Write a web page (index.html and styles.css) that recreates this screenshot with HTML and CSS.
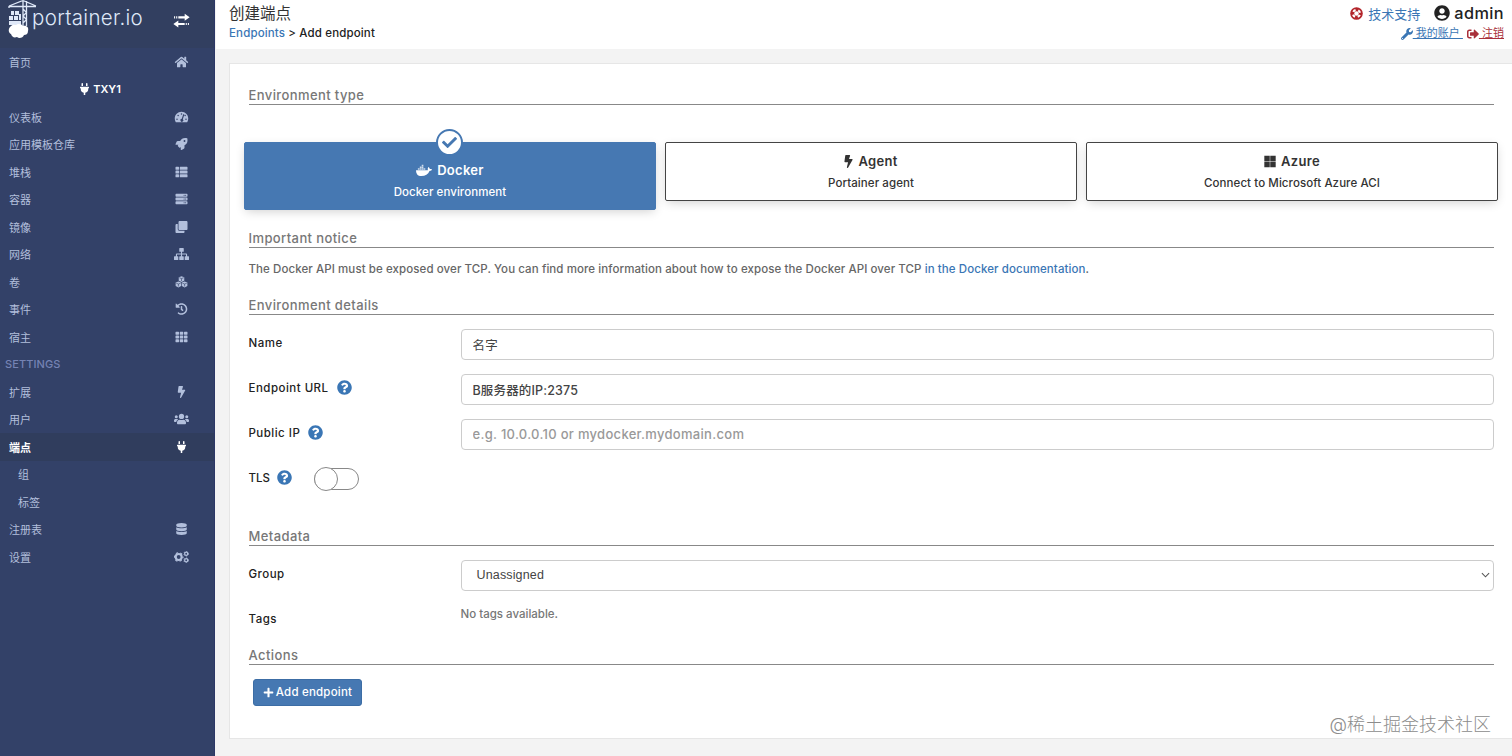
FILE: index.html
```html
<!DOCTYPE html>
<html lang="zh">
<head>
<meta charset="UTF-8">
<meta name="viewport" content="width=device-width, initial-scale=1.0">
<title>Portainer</title>
<link rel="stylesheet" href="styles.css">
</head>
<body>

<!-- icon sprite -->
<svg class="sprite">
  <symbol id="home" viewBox="0 0 576 512"><path d="M280.37 148.26L96 300.11V464a16 16 0 0 0 16 16l112.06-.29a16 16 0 0 0 15.92-16V368a16 16 0 0 1 16-16h64a16 16 0 0 1 16 16v95.64a16 16 0 0 0 16 16.05L464 480a16 16 0 0 0 16-16V300L295.67 148.26a12.19 12.19 0 0 0-15.3 0zM571.6 251.47L488 182.56V44.05a12 12 0 0 0-12-12h-56a12 12 0 0 0-12 12v72.61L318.47 43a48 48 0 0 0-61 0L4.34 251.47a12 12 0 0 0-1.6 16.9l25.5 31A12 12 0 0 0 45.15 301l235.22-193.74a12.19 12.19 0 0 1 15.3 0L530.9 301a12 12 0 0 0 16.9-1.6l25.5-31a12 12 0 0 0-1.7-16.93z"/></symbol>
  <symbol id="plug" viewBox="0 0 384 512"><path d="M320,32a32,32,0,0,0-64,0v96h64Zm48,128H16A16,16,0,0,0,0,176v32a16,16,0,0,0,16,16H32v32A160.07,160.07,0,0,0,160,412.8V512h64V412.8A160.07,160.07,0,0,0,352,256V224h16a16,16,0,0,0,16-16V176A16,16,0,0,0,368,160ZM128,32a32,32,0,0,0-64,0v96h64Z"/></symbol>
  <symbol id="tachometer" viewBox="0 0 576 512"><path fill-rule="evenodd" d="M288 32C129 32 0 161 0 320c0 53 14 102 39 145 6 9 16 15 27 15h444c11 0 21-6 27-15 25-43 39-92 39-145C576 161 447 32 288 32zM288 96a32 32 0 1 1 0 64a32 32 0 1 1 0-64zM96 384a32 32 0 1 1 0-64a32 32 0 1 1 0 64zM144 224a32 32 0 1 1 0-64a32 32 0 1 1 0 64zM391 134a24 24 0 0 1 15 30l-61 184a64 64 0 1 1-46-15l61-184a24 24 0 0 1 31-15zM480 384a32 32 0 1 1 0-64a32 32 0 1 1 0 64zM442 224a32 32 0 1 1 0-64a32 32 0 1 1 0 64z"/></symbol>
  <symbol id="rocket" viewBox="0 0 512 512"><path d="M505.12 19.09c-1.19-5.53-6.66-11-12.21-12.19C460.72 0 435.51 0 410.41 0 307.18 0 245.27 55.2 199.05 128H94.84c-16.35.02-35.56 11.88-42.89 26.48L2.52 253.3A28.4 28.4 0 0 0 0 264a24 24 0 0 0 24 24h103.82l-22.48 22.47c-11.36 11.36-13 32.26 0 45.25l50.91 50.9c11.15 11.19 32.15 13.16 45.27 0L224 384.16V488a24 24 0 0 0 24 24 28.56 28.56 0 0 0 10.71-2.52l98.73-49.39c14.63-7.3 26.51-26.5 26.51-42.86V312.8C456.55 266.48 512 204.39 512 101.7c.08-25.2.08-50.4-6.88-82.61zM384.04 168a40 40 0 1 1 40-40 40 40 0 0 1-40 40z"/></symbol>
  <symbol id="th-list" viewBox="0 0 512 512"><path d="M24 32h101c13 0 24 11 24 24v80c0 13-11 24-24 24H24c-13 0-24-11-24-24V56c0-13 11-24 24-24zM24 192h101c13 0 24 11 24 24v80c0 13-11 24-24 24H24c-13 0-24-11-24-24v-80c0-13 11-24 24-24zM24 352h101c13 0 24 11 24 24v80c0 13-11 24-24 24H24c-13 0-24-11-24-24v-80c0-13 11-24 24-24zM205 32h283c13 0 24 11 24 24v80c0 13-11 24-24 24H205c-13 0-24-11-24-24V56c0-13 11-24 24-24zM205 192h283c13 0 24 11 24 24v80c0 13-11 24-24 24H205c-13 0-24-11-24-24v-80c0-13 11-24 24-24zM205 352h283c13 0 24 11 24 24v80c0 13-11 24-24 24H205c-13 0-24-11-24-24v-80c0-13 11-24 24-24z"/></symbol>
  <symbol id="server" viewBox="0 0 512 512"><path fill-rule="evenodd" d="M480 160H32a32 32 0 0 1-32-32V64a32 32 0 0 1 32-32h448a32 32 0 0 1 32 32v64a32 32 0 0 1-32 32zM432 72a24 24 0 1 0 0 48a24 24 0 1 0 0-48zM368 72a24 24 0 1 0 0 48a24 24 0 1 0 0-48zM480 320H32a32 32 0 0 1-32-32v-64a32 32 0 0 1 32-32h448a32 32 0 0 1 32 32v64a32 32 0 0 1-32 32zM432 232a24 24 0 1 0 0 48a24 24 0 1 0 0-48zM368 232a24 24 0 1 0 0 48a24 24 0 1 0 0-48zM480 480H32a32 32 0 0 1-32-32v-64a32 32 0 0 1 32-32h448a32 32 0 0 1 32 32v64a32 32 0 0 1-32 32zM432 392a24 24 0 1 0 0 48a24 24 0 1 0 0-48zM368 392a24 24 0 1 0 0 48a24 24 0 1 0 0-48z"/></symbol>
  <symbol id="clone" viewBox="0 0 512 512"><path d="M464 0c26.51 0 48 21.49 48 48v288c0 26.51-21.49 48-48 48H176c-26.51 0-48-21.49-48-48V48c0-26.51 21.49-48 48-48h288M176 416c-44.112 0-80-35.888-80-80V128H48c-26.51 0-48 21.49-48 48v288c0 26.51 21.49 48 48 48h288c26.51 0 48-21.49 48-48v-48H176z"/></symbol>
  <symbol id="sitemap" viewBox="0 0 640 512"><path d="M248 0h144a24 24 0 0 1 24 24v112a24 24 0 0 1-24 24h-48v72h176a40 40 0 0 1 40 40v80h56a24 24 0 0 1 24 24v112a24 24 0 0 1-24 24H480a24 24 0 0 1-24-24V376a24 24 0 0 1 24-24h32v-72H344v72h48a24 24 0 0 1 24 24v112a24 24 0 0 1-24 24H248a24 24 0 0 1-24-24V376a24 24 0 0 1 24-24h48v-72H128v72h32a24 24 0 0 1 24 24v112a24 24 0 0 1-24 24H24a24 24 0 0 1-24-24V376a24 24 0 0 1 24-24h56v-80a40 40 0 0 1 40-40h176v-72h-48a24 24 0 0 1-24-24V24a24 24 0 0 1 24-24z"/></symbol>
  <symbol id="cubes" viewBox="0 0 512 512">
    <g id="cube"><path d="M256 6l118 44v148l-118 56-118-56V50z"/><path d="M160 72l96 38 96-38M256 110v104" fill="none" stroke="#334168" stroke-width="26"/></g>
    <use href="#cube" x="-132" y="232"/><use href="#cube" x="132" y="232"/>
  </symbol>
  <symbol id="history" viewBox="0 0 512 512"><path d="M504 255.531c.253 136.64-111.18 248.372-247.82 248.468-59.015.042-113.223-20.53-155.822-54.911-11.077-8.94-11.905-25.541-1.839-35.607l11.267-11.267c8.609-8.609 22.353-9.551 31.891-1.984C173.062 425.135 212.781 440 256 440c101.705 0 184-82.311 184-184 0-101.705-82.311-184-184-184-48.814 0-93.149 18.969-126.068 49.932l50.754 50.754c10.08 10.08 2.941 27.314-11.313 27.314H24c-8.837 0-16-7.163-16-16V38.627c0-14.254 17.234-21.393 27.314-11.314l49.372 49.372C129.209 34.136 189.552 8 256 8c136.81 0 247.747 110.78 248 247.531zm-180.912 78.784l9.823-12.63c8.138-10.463 6.253-25.542-4.21-33.679L288 256.349V152c0-13.255-10.745-24-24-24h-16c-13.255 0-24 10.745-24 24v135.651l65.409 50.874c10.463 8.137 25.541 6.253 33.679-4.21z"/></symbol>
  <symbol id="th" viewBox="0 0 512 512"><path d="M20 32h109q20 0 20 20v88q0 20-20 20H20q-20 0-20-20V52q0-20 20-20zM201 32h110q20 0 20 20v88q0 20-20 20H201q-20 0-20-20V52q0-20 20-20zM383 32h109q20 0 20 20v88q0 20-20 20H383q-20 0-20-20V52q0-20 20-20zM20 192h109q20 0 20 20v88q0 20-20 20H20q-20 0-20-20v-88q0-20 20-20zM201 192h110q20 0 20 20v88q0 20-20 20H201q-20 0-20-20v-88q0-20 20-20zM383 192h109q20 0 20 20v88q0 20-20 20H383q-20 0-20-20v-88q0-20 20-20zM20 352h109q20 0 20 20v88q0 20-20 20H20q-20 0-20-20v-88q0-20 20-20zM201 352h110q20 0 20 20v88q0 20-20 20H201q-20 0-20-20v-88q0-20 20-20zM383 352h109q20 0 20 20v88q0 20-20 20H383q-20 0-20-20v-88q0-20 20-20z"/></symbol>
  <symbol id="bolt" viewBox="0 0 320 512"><path d="M296 160H180.6l42.6-129.8C227.2 15 215.7 0 200 0H56C44 0 33.8 8.9 32.2 20.8l-32 240C-1.7 275.2 9.5 288 24 288h118.7L96.6 482.5c-3.6 15.2 8 29.5 23.3 29.5 8.4 0 16.4-4.4 20.8-12l176-304c9.3-15.9-2.2-36-20.7-36z"/></symbol>
  <symbol id="users" viewBox="0 0 640 512"><circle cx="96" cy="160" r="64"/><circle cx="544" cy="160" r="64"/><circle cx="320" cy="144" r="112"/><path d="M64 256h64c18 0 34 7 45 19-40 22-69 61-75 109H32c-18 0-32-14-32-32v-32c0-35 29-64 64-64zM576 256h-64c-18 0-34 7-45 19 40 22 69 61 75 109h66c18 0 32-14 32-32v-32c0-35-29-64-64-64zM243 288h8c42 20 96 20 138 0h8c64 0 115 52 115 115v29c0 27-21 48-48 48H176c-27 0-48-21-48-48v-29c0-63 51-115 115-115z"/></symbol>
  <symbol id="database" viewBox="0 0 448 512"><path d="M448 73.143v45.714C448 159.143 347.667 192 224 192S0 159.143 0 118.857V73.143C0 32.857 100.333 0 224 0s224 32.857 224 73.143zM448 176v102.857C448 319.143 347.667 352 224 352S0 319.143 0 278.857V176c48.125 33.143 136.208 48.572 224 48.572S399.874 209.143 448 176zm0 160v102.857C448 479.143 347.667 512 224 512S0 479.143 0 438.857V336c48.125 33.143 136.208 48.572 224 48.572S399.874 369.143 448 336z"/></symbol>
  <symbol id="cogs" viewBox="0 0 640 512"><g fill="none" stroke="currentColor"><circle cx="200" cy="256" r="126" stroke-width="90"/><circle cx="200" cy="256" r="184" stroke-width="50" stroke-dasharray="96.350 96.350" stroke-dashoffset="48"/><circle cx="520" cy="116" r="66" stroke-width="54"/><circle cx="520" cy="116" r="100" stroke-width="34" stroke-dasharray="52.360 52.360"/><circle cx="520" cy="396" r="66" stroke-width="54"/><circle cx="520" cy="396" r="100" stroke-width="34" stroke-dasharray="52.360 52.360"/></g></symbol>
  <symbol id="exchange" viewBox="0 0 48 42"><path d="M3 9h3v6H3zM9 9h3v6H9zM15 9h18V2l14 10-14 10v-7H15zM45 28h-3v6h3zM39 28h-3v6h3zM33 28H15v-7L1 31l14 10v-7h18z"/></symbol>
  <symbol id="check" viewBox="0 0 512 512"><path d="M173.898 439.404l-166.4-166.4c-9.997-9.997-9.997-26.206 0-36.204l36.203-36.204c9.997-9.998 26.207-9.998 36.204 0L192 312.69 432.095 72.596c9.997-9.997 26.207-9.997 36.204 0l36.203 36.204c9.997 9.997 9.997 26.206 0 36.204l-294.4 294.401c-9.998 9.997-26.207 9.997-36.204-.001z"/></symbol>
  <symbol id="question" viewBox="0 0 512 512"><path d="M504 256c0 136.997-111.043 248-248 248S8 392.997 8 256C8 119.083 119.043 8 256 8s248 111.083 248 248zM262.655 90c-54.497 0-89.255 22.957-116.549 63.758-3.536 5.286-2.353 12.415 2.715 16.258l34.699 26.31c5.205 3.947 12.621 3.008 16.665-2.122 17.864-22.658 30.113-35.797 57.303-35.797 20.429 0 45.698 13.148 45.698 32.958 0 14.976-12.363 22.667-32.534 33.976C247.128 238.528 216 254.941 216 296v4c0 6.627 5.373 12 12 12h56c6.627 0 12-5.373 12-12v-1.333c0-28.462 83.186-29.647 83.186-106.667 0-58.002-60.165-102-116.531-102zM256 338c-25.365 0-46 20.635-46 46 0 25.364 20.635 46 46 46s46-20.636 46-46c0-25.365-20.635-46-46-46z"/></symbol>
  <symbol id="life-ring" viewBox="0 0 512 512"><circle cx="256" cy="256" r="248"/><circle cx="256" cy="256" r="140" fill="none" stroke="#fff" stroke-width="84" stroke-dasharray="110 110" stroke-dashoffset="-55"/><circle cx="256" cy="256" r="88" fill="#fff"/></symbol>
  <symbol id="user" viewBox="0 0 496 512"><path d="M248 8C111 8 0 119 0 256s111 248 248 248 248-111 248-248S385 8 248 8zm0 96c48.6 0 88 39.4 88 88s-39.4 88-88 88-88-39.4-88-88 39.4-88 88-88zm0 344c-58.7 0-111.3-26.6-146.5-68.2 18.8-35.4 55.6-59.8 98.5-59.8 2.4 0 4.8.4 7.1 1.1 13 4.2 26.6 6.9 40.9 6.9 14.3 0 28-2.7 40.9-6.9 2.3-.7 4.7-1.1 7.1-1.1 42.9 0 79.7 24.4 98.5 59.8C359.3 421.4 306.7 448 248 448z"/></symbol>
  <symbol id="wrench" viewBox="0 0 512 512"><path d="M507.73 109.1c-2.24-9.03-13.54-12.09-20.12-5.51l-74.36 74.36-67.88-11.31-11.31-67.88 74.36-74.36c6.62-6.62 3.43-17.9-5.66-20.16-47.38-11.74-99.55.91-136.58 37.93-39.64 39.64-50.55 97.1-34.05 147.2L18.74 402.76c-24.99 24.99-24.99 65.51 0 90.5 24.99 24.99 65.51 24.99 90.5 0l213.21-213.21c50.12 16.71 107.47 5.68 147.37-34.22 37.07-37.07 49.7-89.32 37.91-136.73zM64 472c-13.25 0-24-10.75-24-24 0-13.26 10.75-24 24-24s24 10.74 24 24c0 13.25-10.75 24-24 24z"/></symbol>
  <symbol id="sign-out" viewBox="0 0 512 512"><path d="M497 273L329 441c-15 15-41 4.5-41-17v-96H152c-13.3 0-24-10.7-24-24v-96c0-13.3 10.7-24 24-24h136V88c0-21.4 25.9-32 41-17l168 168c9.3 9.4 9.3 24.6 0 34zM192 436v-40c0-6.6-5.4-12-12-12H96c-17.7 0-32-14.3-32-32V160c0-17.7 14.3-32 32-32h84c6.6 0 12-5.4 12-12V76c0-6.6-5.4-12-12-12H96c-53 0-96 43-96 96v192c0 53 43 96 96 96h84c6.6 0 12-5.4 12-12z"/></symbol>
  <symbol id="docker" viewBox="0 0 640 512"><path d="M75 164h66v60H75zM152 164h66v60h-66zM229 164h66v60h-66zM306 164h66v60h-66zM152 94h66v60h-66zM229 94h66v60h-66zM229 24h66v60h-66z" opacity=".75"/><path d="M629 203c-15-10-50-14-76-9-4-25-18-47-43-66l-14-10-10 14c-19 29-24 76-4 107-9 5-26 11-49 11H5c-9 51 6 117 44 162 37 43 93 66 165 66 157 0 273-72 328-204 21 0 67 0 91-45l7-13z"/></symbol>
  <symbol id="microsoft" viewBox="0 0 448 512"><path d="M0 32h214.6v214.6H0V32zm233.4 0H448v214.6H233.4V32zM0 265.4h214.6V480H0V265.4zm233.4 0H448V480H233.4V265.4z"/></symbol>
  <symbol id="plus" viewBox="0 0 448 512"><path d="M416 208H272V64c0-18-14-32-32-32h-32c-18 0-32 14-32 32v144H32c-18 0-32 14-32 32v32c0 18 14 32 32 32h144v144c0 18 14 32 32 32h32c18 0 32-14 32-32V304h144c18 0 32-14 32-32v-32c0-18-14-32-32-32z"/></symbol>
</svg>

<div class="page">
  <nav class="sidebar">
    <div class="sidebar-header">
      <svg class="crane" viewBox="0 0 30 40">
        <path d="M1 6.5h27M1 6l14-5.500L28 6M15 0v26M18.500 1v25M1 6v2M15 9l3.500 3.500L15 16l3.500 3.500L15 23" fill="none" stroke="#dfe8f8" stroke-width="1.300"/>
        <path d="M3 11h3v4H3zM7 11h4v4H7zM1 16h4v4H1zM6 16h4v4H6zM11 14h2v6h-2zM1 21h12v4H1z" fill="#dfe8f8"/>
        <path d="M3 26c2-2 4-1 5-1 2-2 6-1 7 1 4-1 6 2 5 5 0 3-2 4-4 4-1 3-5 4-7 2-3 1-5 0-6-3-3-1-3-6 0-8z" fill="#fff"/>
      </svg>
      <span class="brand">portainer.io</span>
      <svg class="toggle"><use href="#exchange"/></svg>
    </div>
    <ul class="menu">
      <li>首页<svg><use href="#home"/></svg></li>
      <li class="endpoint-name"><svg><use href="#plug"/></svg>TXY1</li>
      <li>仪表板<svg><use href="#tachometer"/></svg></li>
      <li>应用模板仓库<svg><use href="#rocket"/></svg></li>
      <li>堆栈<svg><use href="#th-list"/></svg></li>
      <li>容器<svg><use href="#server"/></svg></li>
      <li>镜像<svg><use href="#clone"/></svg></li>
      <li>网络<svg><use href="#sitemap"/></svg></li>
      <li>卷<svg><use href="#cubes"/></svg></li>
      <li>事件<svg><use href="#history"/></svg></li>
      <li>宿主<svg><use href="#th"/></svg></li>
      <li class="menu-title">SETTINGS</li>
      <li>扩展<svg><use href="#bolt"/></svg></li>
      <li>用户<svg><use href="#users"/></svg></li>
      <li class="active">端点<svg><use href="#plug"/></svg></li>
      <li class="sub">组</li>
      <li class="sub">标签</li>
      <li>注册表<svg><use href="#database"/></svg></li>
      <li>设置<svg><use href="#cogs"/></svg></li>
    </ul>
  </nav>

  <main class="content">
    <header class="header">
      <div>
        <div class="title">创建端点</div>
        <div class="breadcrumb"><a href="#">Endpoints</a> &gt; Add endpoint</div>
      </div>
      <div class="account">
        <div class="account-top">
          <a class="support" href="#"><svg><use href="#life-ring"/></svg>技术支持</a>
          <span class="username"><svg><use href="#user"/></svg>admin</span>
        </div>
        <div class="account-links">
          <a href="#"><svg><use href="#wrench"/></svg><u>&nbsp;我的账户&nbsp;</u></a>
          <a class="logout" href="#"><svg><use href="#sign-out"/></svg><u>&nbsp;注销</u></a>
        </div>
      </div>
    </header>

    <form class="widget">
      <div class="section-title">Environment type</div>
      <div class="box-selector">
        <div class="box selected">
          <span class="box-check"><svg><use href="#check"/></svg></span>
          <div class="box-header"><svg class="wide"><use href="#docker"/></svg>Docker</div>
          <div>Docker environment</div>
        </div>
        <div class="box">
          <div class="box-header"><svg class="narrow"><use href="#bolt"/></svg>Agent</div>
          <div>Portainer agent</div>
        </div>
        <div class="box">
          <div class="box-header"><svg><use href="#microsoft"/></svg>Azure</div>
          <div>Connect to Microsoft Azure ACI</div>
        </div>
      </div>

      <div class="section-title notice-title">Important notice</div>
      <p class="notice">The Docker API must be exposed over TCP. You can find more information about how to expose the Docker API over TCP <a href="#">in the Docker documentation</a>.</p>

      <div class="section-title details-title">Environment details</div>
      <div class="form-group">
        <label>Name</label>
        <input class="form-control name" type="text" value="名字">
      </div>
      <div class="form-group">
        <label>Endpoint URL <svg><use href="#question"/></svg></label>
        <input class="form-control" type="text" value="B服务器的IP:2375">
      </div>
      <div class="form-group">
        <label>Public IP <svg><use href="#question"/></svg></label>
        <input class="form-control" type="text" placeholder="e.g. 10.0.0.10 or mydocker.mydomain.com">
      </div>
      <div class="form-group tls">
        <label>TLS <svg><use href="#question"/></svg></label>
        <span class="switch"><i></i></span>
      </div>

      <div class="section-title metadata-title">Metadata</div>
      <div class="form-group">
        <label>Group</label>
        <div class="form-control select">Unassigned<svg viewBox="0 0 10 6"><path d="M1 1l4 4 4-4" fill="none" stroke="#555" stroke-width="1.200"/></svg></div>
      </div>
      <div class="form-group">
        <label>Tags</label>
        <span class="no-tags">No tags available.</span>
      </div>

      <div class="section-title actions-title">Actions</div>
      <button class="btn" type="button"><svg><use href="#plus"/></svg>Add endpoint</button>
    </form>
  </main>
</div>

<div class="watermark">@稀土掘金技术社区</div>

</body>
</html>
```
FILE: styles.css
```css
* {
  box-sizing: border-box;
}

body {
  margin: 0;
  height: 756px;
  overflow: hidden;
  background: #f3f3f3;
  font-family: Inter, "Noto Sans CJK SC", sans-serif;
  font-size: 11.5px;
  font-weight: 500;
  color: #333;
}

svg {
  fill: currentColor;
  flex: none;
}

a {
  color: #3a76b5;
  text-decoration: none;
}

.sprite {
  position: absolute;
  width: 0;
  height: 0;
}

.page {
  display: flex;
  height: 756px;
}

/* sidebar */
.sidebar {
  width: 215px;
  background: #334168;
  border-right: 1px solid #2c3766;
  color: #b2bfdc;
}

.sidebar-header {
  display: flex;
  align-items: flex-start;
  height: 48px;
  padding-left: 8px;
  background: #323f60;
}

.crane {
  width: 30px;
  height: 40px;
}

.brand {
  width: 113px;
  margin-left: -6px;
  font-size: 20.5px;
  font-weight: 300;
  line-height: 35px;
  letter-spacing: 0.32px;
  color: #dfe8f8;
}

.toggle {
  width: 17px;
  height: 15px;
  margin: 13px 0 0 28px;
  color: #fff;
}

.menu {
  margin: 0;
  padding: 0;
  list-style: none;
}

.menu li {
  display: flex;
  align-items: center;
  justify-content: space-between;
  height: 27.5px;
  padding: 0 25px 0 9px;
  font-size: 11px;
  font-weight: 400;
}

.menu svg {
  width: 15px;
  height: 12px;
}

.menu .endpoint-name {
  justify-content: center;
  gap: 4px;
  padding: 0 13px 0 0;
  color: #fff;
  font-weight: 600;
}

.menu .endpoint-name svg {
  width: 9px;
}

.menu .menu-title {
  padding-left: 5px;
  color: #7583b4;
  font-weight: 500;
  letter-spacing: 0.1px;
}

.menu .active {
  background: #303d5d;
  color: #fff;
  font-weight: 700;
}

.menu .sub {
  padding-left: 18px;
}

/* header */
.content {
  flex: 1;
  min-width: 0;
}

.header {
  display: flex;
  justify-content: space-between;
  height: 49px;
  padding: 0 8px 0 13px;
  margin-left: 1px;
  background: #fff;
}

.title {
  padding-top: 2px;
  font-size: 15.5px;
  font-weight: 400;
  line-height: 23px;
}

.breadcrumb {
  line-height: 16px;
  letter-spacing: 0.14px;
  color: #222;
}

.account-top {
  display: flex;
  align-items: center;
  justify-content: flex-end;
  gap: 14px;
  height: 26px;
}

.account-top > * {
  display: flex;
  align-items: center;
}

.support {
  gap: 5px;
  font-size: 13px;
  font-weight: 400;
}

.support svg {
  width: 13px;
  height: 13px;
  color: #b3252b;
}

.username {
  gap: 4px;
  font-size: 16.3px;
  letter-spacing: 0.4px;
  color: #222;
}

.username svg {
  width: 16px;
  height: 16px;
}

.account-links {
  display: flex;
  justify-content: flex-end;
  gap: 4px;
  font-size: 11px;
  line-height: 15px;
}

.account-links a {
  display: flex;
  align-items: center;
  font-weight: 400;
}

.account-links svg {
  width: 12px;
  height: 12px;
}

.account-links .logout {
  color: #a9303a;
}

/* form panel */
.widget {
  height: 676px;
  margin: 14px 0 0 14px;
  padding: 19px 18.5px 0 18.5px;
  background: #fff;
  border: 1px solid #e6e6e6;
  border-right: 0;
}

.section-title {
  height: 22px;
  border-bottom: 1px solid #888;
  font-size: 13px;
  line-height: 24px;
  letter-spacing: 0.4px;
  color: #777;
}

.box-selector {
  display: flex;
  align-items: flex-start;
  gap: 9px;
  height: 68px;
  margin: 37px -4.5px 0;
}

.box {
  position: relative;
  flex: 1;
  height: 59px;
  padding-top: 7px;
  border: 1px solid #444;
  border-radius: 2px;
  box-shadow: 0 3px 10px -2px rgba(0, 0, 0, 0.2);
  line-height: 22px;
  letter-spacing: 0.08px;
  text-align: center;
}

.box.selected {
  height: 68px;
  padding-top: 16px;
  background: #4678b2;
  border-color: #4678b2;
  color: #fff;
}

.box-header {
  display: flex;
  align-items: center;
  justify-content: center;
  gap: 5px;
  height: 22px;
  font-size: 13px;
  font-weight: 600;
  letter-spacing: 0.3px;
}

.box-header svg {
  width: 12px;
  height: 13px;
}

.box-header .wide {
  width: 16px;
}

.box-header .narrow {
  width: 9px;
}

.box-check {
  position: absolute;
  top: -14px;
  left: 50%;
  display: flex;
  align-items: center;
  justify-content: center;
  width: 27px;
  height: 27px;
  margin-left: -14px;
  background: #fff;
  border: 2px solid #4678b2;
  border-radius: 50%;
  color: #4678b2;
}

.box-check svg {
  width: 15px;
  height: 15px;
}

.notice-title {
  margin-top: 16px;
}

.notice {
  margin: 11px 0 0;
  line-height: 20px;
  letter-spacing: 0.085px;
  color: #666;
}

.details-title {
  margin-top: 14px;
  margin-bottom: 14px;
}

.form-group {
  display: flex;
  height: 31px;
  margin-bottom: 14px;
}

.form-group label {
  display: flex;
  gap: 8px;
  width: 212px;
  line-height: 29px;
  letter-spacing: 0.48px;
  color: #222;
}

.form-group label svg {
  width: 15px;
  height: 15px;
  margin-top: 6px;
  color: #3a76b5;
}

.form-control {
  flex: 1;
  height: 31px;
  padding: 0 11px 1px;
  background: #fff;
  border: 1px solid #ccc;
  border-radius: 4px;
  font: inherit;
  font-size: 12.5px;
  letter-spacing: 0.15px;
  color: #444;
}

.form-control.name {
  font-weight: 400;
}

.form-control::placeholder {
  color: #999;
  font-size: 13px;
  letter-spacing: 0.3px;
}

.select {
  display: flex;
  align-items: center;
  justify-content: space-between;
  padding: 0 3px 1px 15px;
  font-family: "Liberation Sans", Arial, sans-serif;
  font-weight: 400;
  letter-spacing: 0.15px;
}

.select svg {
  width: 9px;
  height: 6px;
}

.form-group.tls label {
  gap: 7px;
  width: 65px;
  letter-spacing: 0;
}

.switch {
  width: 45px;
  height: 22px;
  margin-top: 4px;
  border: 1px solid #888;
  border-radius: 11px;
}

.switch i {
  display: block;
  width: 24px;
  height: 24px;
  margin: -2px 0 0 -1px;
  background: #fff;
  border: 1px solid #888;
  border-radius: 50%;
}

.metadata-title {
  margin: 29px 0 14px;
}

.no-tags {
  line-height: 18px;
  letter-spacing: 0;
  color: #777;
}

.actions-title {
  margin-top: -7px;
}

.btn {
  display: flex;
  align-items: center;
  justify-content: center;
  gap: 2px;
  width: 109px;
  height: 27px;
  margin: 14px 0 0 4.5px;
  padding: 0 0 1px;
  background: #4678b2;
  border: 1px solid #3c6da5;
  border-radius: 3px;
  font: inherit;
  letter-spacing: 0.2px;
  color: #fff;
}

.btn svg {
  width: 11px;
  height: 11px;
}

.watermark {
  position: absolute;
  right: 21px;
  bottom: 18px;
  font-size: 18px;
  font-weight: 300;
  line-height: 26px;
  color: #8c8c8c;
}
```
